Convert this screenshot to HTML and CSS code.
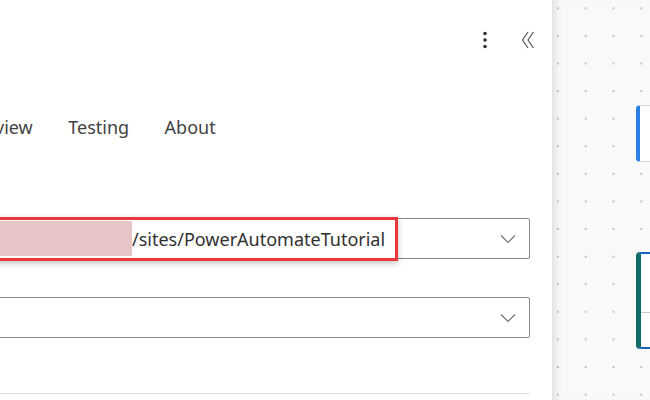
FILE: index.html
```html
<!DOCTYPE html>
<html>
<head>
<meta charset="utf-8">
<link rel="stylesheet" href="styles.css">
</head>
<body>
<div class="panel">
  <div class="header">
    <span class="icon-btn" aria-label="More">
      <svg width="6" height="18" viewBox="0 0 6 18"><circle cx="3" cy="2.5" r="1.8" fill="#323130"/><circle cx="3" cy="9" r="1.8" fill="#323130"/><circle cx="3" cy="15.5" r="1.8" fill="#323130"/></svg>
    </span>
    <span class="icon-btn" aria-label="Collapse">
      <svg width="16" height="18" viewBox="0 0 16 18"><path d="M8 1 L2.5 9 L8 17 M13.5 1 L8 9 L13.5 17" fill="none" stroke="#4a4a4a" stroke-width="1.1"/></svg>
    </span>
  </div>
  <nav class="tabs">
    <span class="tab tab-cut">view</span>
    <span class="tab">Testing</span>
    <span class="tab">About</span>
  </nav>
  <div class="fields">
    <div class="field">
      <div class="value"><span class="redacted"></span><span class="url">/sites/PowerAutomateTutorial</span></div>
      <svg class="chev" width="16" height="10" viewBox="0 0 16 10"><path d="M1 1.5 L8 8.5 L15 1.5" fill="none" stroke="#707070" stroke-width="1.1"/></svg>
      <div class="highlight"></div>
    </div>
    <div class="field">
      <div class="value"></div>
      <svg class="chev" width="16" height="10" viewBox="0 0 16 10"><path d="M1 1.5 L8 8.5 L15 1.5" fill="none" stroke="#707070" stroke-width="1.1"/></svg>
    </div>
    <div class="divider"></div>
  </div>
</div>
<div class="canvas">
  <div class="card card-blue"></div>
  <div class="card card-teal"><div class="card-line"></div></div>
</div>
</body>
</html>
```
FILE: styles.css
```css
* { box-sizing: border-box; }
html, body { margin: 0; padding: 0; }
body {
  width: 650px;
  height: 400px;
  overflow: hidden;
  display: flex;
  font-family: "Noto Sans", "Open Sans", sans-serif;
  color: #323130;
  background: #fff;
}
.panel {
  width: 553px;
  flex: none;
  background: #fff;
  padding: 0 22px 0 0;
  border-right: 1px solid #e4e4e4;
  display: flex;
  flex-direction: column;
}
.header {
  height: 80px;
  display: flex;
  justify-content: flex-end;
  align-items: center;
  gap: 32px;
  margin-right: -6px;
}
.icon-btn { display: flex; align-items: center; justify-content: center; }
.tabs {
  display: flex;
  gap: 35.5px;
  height: 138px;
  padding-top: 34px;
  font-size: 18px;
  color: #424242;
}
.tab { line-height: 26px; }
.tab-cut { margin-left: -5px; }
.fields {
  margin-left: -20px;
  display: flex;
  flex-direction: column;
}
.field {
  position: relative;
  height: 41px;
  border: 1px solid #8a8886;
  border-radius: 2px;
  display: flex;
  align-items: center;
  justify-content: space-between;
  padding-right: 13px;
  margin-bottom: 38px;
}
.value { display: flex; align-items: center; height: 100%; }
.redacted {
  width: 151px;
  height: 35px;
  background: #e7c6c8;
}
.url {
  font-size: 18px;
  color: #323130;
  padding-left: 0;
  letter-spacing: 0;
}
.chev { margin-top: 1px; }
.highlight {
  position: absolute;
  left: -5px;
  top: -2px;
  width: 422px;
  height: 44px;
  border: 3px solid #e8383d;
  box-shadow: 0 2px 6px rgba(0,0,0,0.25);
  pointer-events: none;
}
.divider {
  margin-top: 17px;
  border-top: 1px solid #e1e1e1;
}
.canvas {
  flex: 1;
  position: relative;
  background-color: #f9f9f9;
  background-image: radial-gradient(circle, #c4c4c4 0.9px, transparent 1.3px);
  background-size: 27.8px 27.6px;
  background-position: -9px -5.5px;
  box-shadow: inset 8px 0 8px -6px rgba(0,0,0,0.10);
}
.card {
  position: absolute;
  left: 83px;
  width: 80px;
  background: #fff;
  border: 1px solid #d6d6d6;
  border-radius: 4px;
}
.card-blue {
  top: 105px;
  height: 57px;
  border-left: 4px solid #2a7fe6;
}
.card-teal {
  top: 252px;
  height: 97px;
  border: 2px solid #1763b8;
  border-left: 5px solid #0f6b66;
}
.card-line {
  position: absolute;
  left: 0;
  right: 0;
  top: 58px;
  border-top: 1px solid #c8c8c8;
}
```
